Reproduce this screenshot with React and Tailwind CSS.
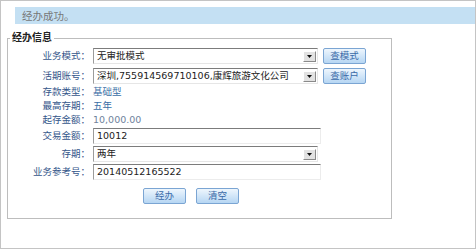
import React from 'react';

const Arrow = () => (
  <span className="flex h-[11px] w-[13px] items-center justify-center border border-t-white border-l-white border-r-[#8a8a8a] border-b-[#8a8a8a] bg-[#e2e2e2]">
    <svg width="5" height="3" viewBox="0 0 5 3">
      <path d="M0 0h5L2.5 3z" fill="#111" />
    </svg>
  </span>
);

const Select = ({ value }) => (
  <div className="flex h-[16px] w-[225px] items-center justify-between border border-t-[#7c7c7c] border-l-[#9c9c9c] border-b-[#e6e6e6] border-r-[#e6e6e6] bg-white pl-[3px] pr-[1px] text-[#222]">
    <span className="whitespace-nowrap">{value}</span>
    <Arrow />
  </div>
);

const Input = ({ value }) => (
  <div className="flex h-[16px] w-[228px] items-center border border-t-[#7c7c7c] border-l-[#9c9c9c] border-b-[#ececec] border-r-[#ececec] bg-white pl-[3px] text-[#222]">
    {value}
  </div>
);

const Btn = ({ children, className = '' }) => (
  <button className={`flex h-[16px] w-[43px] items-center justify-center rounded-[2px] border border-[#7ba5d3] bg-gradient-to-b from-[#eef6fd] to-[#b6d6f3] leading-none text-[#3a6aa8] ${className}`}>
    {children}
  </button>
);

const Row = ({ label, children, h = 'h-[16px]' }) => (
  <div className={`flex items-center ${h}`}>
    <span className="w-[82px] text-right text-[#34568a]">{label}</span>
    <div className="ml-[3px] flex items-center">{children}</div>
  </div>
);

const App = () => {
  return (
    <div className="h-[249px] w-[476px] border border-[#c4c4c4] bg-white font-['DejaVu_Sans','Noto_Sans_CJK_SC',sans-serif] text-[9.5px] leading-[14px]">
      <div className="ml-[14px] mt-[6px] flex h-[17px] items-center bg-[#c4e0f3] pl-[7px] text-[10.5px] text-[#777]">
        经办成功。
      </div>

      <fieldset className="ml-[6px] mt-[7px] w-[385px] border border-[#bdbdbd] pb-[14px]">
        <legend className="ml-[2px] px-[2px] text-[10px] font-bold leading-[14px] text-[#222]">经办信息</legend>

        <div className="flex flex-col pt-[3px]">
          <Row label="业务模式：">
            <Select value="无审批模式" />
            <Btn className="ml-[5px]">查模式</Btn>
          </Row>
          <div className="mt-[4px]">
            <Row label="活期账号：">
              <Select value="深圳,755914569710106,康辉旅游文化公司" />
              <Btn className="ml-[5px]">查账户</Btn>
            </Row>
          </div>
          <div className="mt-[1px]">
            <Row label="存款类型：" h="h-[14px]">
              <span className="text-[#3a6ea5]">基础型</span>
            </Row>
            <Row label="最高存期：" h="h-[14px]">
              <span className="text-[#3a6ea5]">五年</span>
            </Row>
            <Row label="起存金额：" h="h-[14px]">
              <span className="text-[#6f829c]">10,000.00</span>
            </Row>
          </div>
          <div className="mt-[1px] flex flex-col gap-[2px]">
            <Row label="交易金额：">
              <Input value="10012" />
            </Row>
            <Row label="存期：">
              <Select value="两年" />
            </Row>
            <Row label="业务参考号：">
              <Input value="20140512165522" />
            </Row>
          </div>
          <div className="ml-[135px] mt-[8px] flex gap-[10px]">
            <Btn>经办</Btn>
            <Btn>清空</Btn>
          </div>
        </div>
      </fieldset>
    </div>
  );
};

export default App;
